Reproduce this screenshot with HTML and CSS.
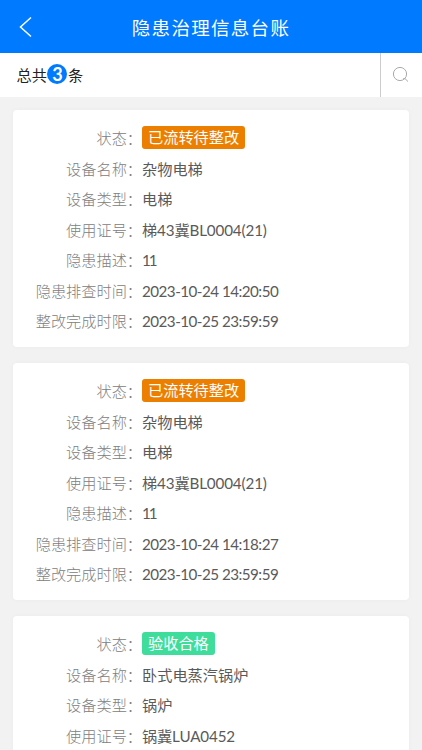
FILE: index.html
```html
<!DOCTYPE html>
<html lang="zh-CN">
<head>
    <meta charset="UTF-8">
    <meta name="viewport" content="width=device-width, initial-scale=1.0">
    <title>隐患治理信息台账</title>
    <link rel="stylesheet" href="styles.css">
</head>
<body>
    <div class="header">
        <svg class="back" viewBox="0 0 14 22"><path d="M12 1.5 L1.5 11 L12 20.5"/></svg>
        <h1>隐患治理信息台账</h1>
    </div>

    <div class="toolbar">
        <div class="total">总共<span class="count">3</span>条</div>
        <div class="search">
            <svg viewBox="0 0 18 18"><circle cx="8" cy="8" r="6.6"/><path d="M11.2 12.6 L13 12.6 L16 15.5"/></svg>
        </div>
    </div>

    <div class="list">
        <div class="card">
            <div class="row status"><span class="label">状态：</span><span class="tag orange">已流转待整改</span></div>
            <div class="row"><span class="label">设备名称：</span><span class="value">杂物电梯</span></div>
            <div class="row"><span class="label">设备类型：</span><span class="value">电梯</span></div>
            <div class="row"><span class="label">使用证号：</span><span class="value code">梯43冀BL0004(21)</span></div>
            <div class="row"><span class="label">隐患描述：</span><span class="value desc">11</span></div>
            <div class="row"><span class="label">隐患排查时间：</span><span class="value time">2023-10-24 14:20:50</span></div>
            <div class="row"><span class="label">整改完成时限：</span><span class="value time">2023-10-25 23:59:59</span></div>
        </div>

        <div class="card">
            <div class="row status"><span class="label">状态：</span><span class="tag orange">已流转待整改</span></div>
            <div class="row"><span class="label">设备名称：</span><span class="value">杂物电梯</span></div>
            <div class="row"><span class="label">设备类型：</span><span class="value">电梯</span></div>
            <div class="row"><span class="label">使用证号：</span><span class="value code">梯43冀BL0004(21)</span></div>
            <div class="row"><span class="label">隐患描述：</span><span class="value desc">11</span></div>
            <div class="row"><span class="label">隐患排查时间：</span><span class="value time">2023-10-24 14:18:27</span></div>
            <div class="row"><span class="label">整改完成时限：</span><span class="value time">2023-10-25 23:59:59</span></div>
        </div>

        <div class="card">
            <div class="row status"><span class="label">状态：</span><span class="tag green">验收合格</span></div>
            <div class="row"><span class="label">设备名称：</span><span class="value">卧式电蒸汽锅炉</span></div>
            <div class="row"><span class="label">设备类型：</span><span class="value">锅炉</span></div>
            <div class="row"><span class="label">使用证号：</span><span class="value code">锅冀LUA0452</span></div>
        </div>
    </div>
</body>
</html>
```
FILE: styles.css
```css
* {
    box-sizing: border-box;
}

body {
    margin: 0;
    height: 750px;
    overflow: hidden;
    display: flex;
    flex-direction: column;
    background: #f2f2f2;
    font-family: Lato, "Noto Sans CJK SC", sans-serif;
    font-size: 15.2px;
}

.header {
    flex: none;
    height: 52.5px;
    padding: 2px 19px 0;
    display: grid;
    grid-template-columns: 14px 1fr 14px;
    align-items: center;
    background: #007aff;
    color: #fff;
}

.header h1 {
    margin: 0;
    text-align: center;
    font-family: "Kaiti SC", KaiTi, STKaiti, "Noto Sans CJK SC", serif;
    font-size: 18.5px;
    font-weight: 400;
    letter-spacing: 1.3px;
    line-height: 26px;
}

.back {
    width: 14px;
    height: 22px;
    fill: none;
    stroke: #fff;
    stroke-width: 1.5;
}

.toolbar {
    flex: none;
    height: 44.5px;
    display: flex;
    background: #fff;
}

.total {
    flex: 1;
    display: flex;
    align-items: center;
    padding: 0 0 1px 16.5px;
    color: #222;
    font-weight: 400;
}

.count {
    width: 20px;
    height: 20px;
    margin: 0 0.5px;
    border-radius: 50%;
    background: #007aff;
    color: #fff;
    font-size: 18px;
    font-weight: bold;
    line-height: 20px;
    text-align: center;
}

.search {
    width: 42.5px;
    display: flex;
    align-items: center;
    justify-content: center;
    border-left: 1.5px solid #ccc;
}

.search svg {
    width: 18px;
    height: 18px;
    fill: none;
    stroke: #aaa;
    stroke-width: 1;
}

.list {
    flex: 1;
    min-height: 0;
    overflow: hidden;
    padding: 13px 13px 0;
}

.card {
    height: 236.5px;
    margin-bottom: 16.5px;
    padding-top: 12px;
    border-radius: 4px;
    background: #fff;
    box-shadow: 0 0 5px rgba(0, 0, 0, 0.03);
}

.row {
    height: 30.5px;
    display: flex;
    align-items: center;
    font-weight: 300;
    line-height: 22px;
    white-space: nowrap;
}

.status {
    height: 31.25px;
}

.label {
    width: 129px;
    text-align: right;
    color: #808080;
}

.value {
    color: #5a5a5a;
    font-weight: 400;
}

.time {
    letter-spacing: -0.52px;
}

.code {
    letter-spacing: -0.13px;
}

.desc {
    letter-spacing: -2px;
}

.tag {
    height: 23px;
    padding: 0 6px;
    border-radius: 3px;
    color: #fff;
    font-weight: 400;
    line-height: 23px;
}

.orange {
    background: #ec7f00;
}

.green {
    background: #3fdd9c;
}
```
